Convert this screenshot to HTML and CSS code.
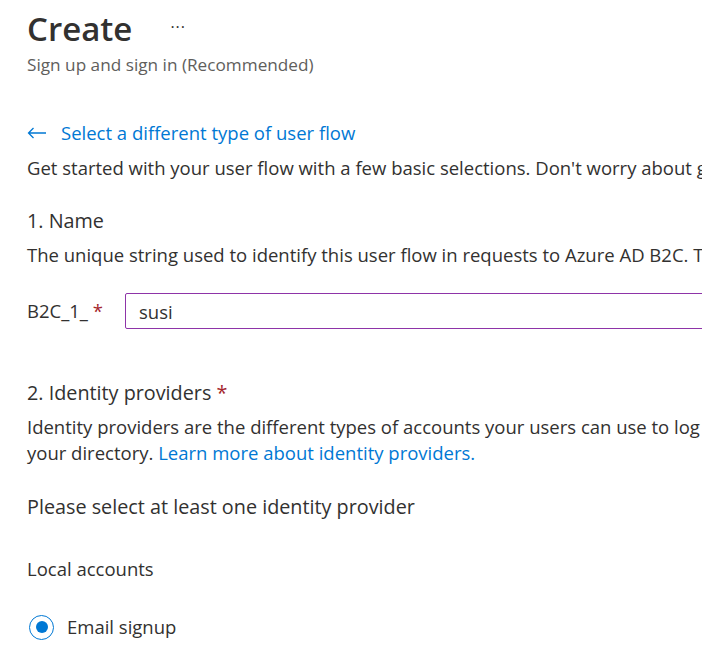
FILE: index.html
```html
<!DOCTYPE html>
<html lang="en">
<head>
<meta charset="utf-8">
<title>Create</title>
<link rel="stylesheet" href="styles.css">
</head>
<body>
<div class="page">
  <header class="header">
    <div class="title-row">
      <h1 class="title">Create</h1>
      <span class="more">···</span>
    </div>
    <div class="subtitle">Sign up and sign in (Recommended)</div>
  </header>

  <a class="back" href="#">
    <svg class="back-icon" width="20" height="12" viewBox="0 0 20 12" aria-hidden="true"><path d="M19 6H1.5M6.5 1L1.5 6l5 5" fill="none" stroke="#0078d4" stroke-width="1.3"/></svg>
    <span>Select a different type of user flow</span>
  </a>
  <p class="text intro">Get started with your user flow with a few basic selections. Don't worry about getting everything right.</p>

  <section class="section">
    <h2 class="heading">1. Name</h2>
    <p class="text">The unique string used to identify this user flow in requests to Azure AD B2C. This cannot be changed.</p>
    <div class="name-row">
      <label class="prefix">B2C_1_ <span class="req">*</span></label>
      <div class="input"><span>susi</span></div>
    </div>
  </section>

  <section class="section idp">
    <h2 class="heading">2. Identity providers <span class="req">*</span></h2>
    <p class="text">Identity providers are the different types of accounts your users can use to log in. Configure them in<br>your directory. <a class="link" href="#">Learn more about identity providers.</a></p>
    <p class="text notice">Please select at least one identity provider</p>
    <p class="text local">Local accounts</p>
    <div class="radio-row">
      <span class="radio"><span class="dot"></span></span>
      <span class="radio-label">Email signup</span>
    </div>
  </section>
</div>
</body>
</html>
```

FILE: styles.css
```css
html, body {
  margin: 0;
  padding: 0;
  background: #ffffff;
  overflow: hidden;
}
body {
  font-family: "Open Sans", "Noto Sans", sans-serif;
  color: #323130;
  font-size: 18.5px;
}
.page {
  width: 1100px;
  padding: 6px 0 0 27px;
  white-space: nowrap;
}
.title-row {
  display: flex;
  align-items: center;
  gap: 38px;
}
.title {
  margin: 0;
  font-size: 33px;
  font-weight: 600;
  line-height: 46px;
  color: #323130;
}
.more {
  font-size: 16px;
  color: #323130;
  letter-spacing: 1px;
  margin-top: -4px;
}
.subtitle {
  font-size: 17.2px;
  color: #605e5c;
  line-height: 22px;
  margin-top: 2px;
}
.back {
  display: flex;
  align-items: center;
  gap: 14px;
  margin-top: 44px;
  color: #0078d4;
  text-decoration: none;
  line-height: 26px;
}
.text {
  margin: 0;
  line-height: 26px;
}
.intro {
  margin-top: 9px;
}
.section {
  margin-top: 27px;
}
.heading {
  margin: 0;
  font-size: 19.8px;
  font-weight: 400;
  line-height: 26px;
  color: #323130;
}
.heading + .text {
  margin-top: 8px;
}
.req {
  color: #a4262c;
}
.name-row {
  display: flex;
  align-items: center;
  margin-top: 25px;
}
.prefix {
  width: 98px;
  line-height: 26px;
}
.input {
  flex: 1;
  height: 34px;
  border: 1px solid #8e34a8;
  border-radius: 2px;
  display: flex;
  align-items: center;
  padding-left: 13px;
}
.idp {
  margin-top: 51px;
}
.link {
  color: #0078d4;
  text-decoration: none;
}
.notice {
  margin-top: 28px;
  font-size: 19.8px;
}
.local {
  margin-top: 36px;
}
.radio-row {
  display: flex;
  align-items: center;
  gap: 13px;
  margin-top: 32px;
  padding-left: 2px;
}
.radio {
  width: 25px;
  height: 25px;
  border: 1px solid #0078d4;
  border-radius: 50%;
  display: flex;
  align-items: center;
  justify-content: center;
  box-sizing: border-box;
}
.dot {
  width: 12px;
  height: 12px;
  border-radius: 50%;
  background: #0078d4;
}
.radio-label {
  line-height: 26px;
}
```
